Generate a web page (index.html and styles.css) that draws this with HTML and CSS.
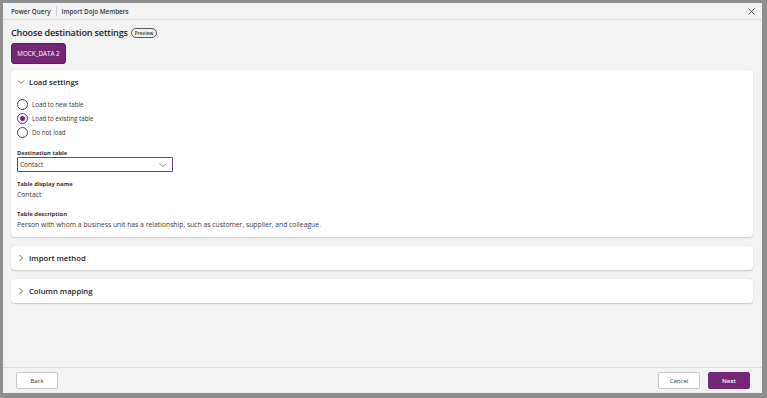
FILE: index.html
```html
<!DOCTYPE html>
<html>
<head>
<meta charset="utf-8">
<link rel="stylesheet" href="styles.css">
</head>
<body>
<div class="dialog">
  <div class="topbar">
    <span class="crumb">Power Query</span>
    <span class="sep"></span>
    <span class="crumb">Import Dojo Members</span>
    <span class="close"><svg width="7" height="7" viewBox="0 0 7 7"><path d="M0.5 0.5L6.5 6.5M6.5 0.5L0.5 6.5" stroke="#444" stroke-width="0.9"/></svg></span>
  </div>
  <div class="content">
    <div class="titlerow">
      <h1 class="title">Choose destination settings</h1>
      <span class="badge">Preview</span>
    </div>
    <div class="tabs"><button class="tab">MOCK_DATA 2</button></div>
    <div class="card card-open">
      <div class="card-head">
        <svg class="chev" width="8" height="8" viewBox="0 0 8 8"><path d="M1 2.5L4 5.5L7 2.5" fill="none" stroke="#555" stroke-width="0.9"/></svg>
        <span class="card-title">Load settings</span>
      </div>
      <div class="radios">
        <div class="radio"><span class="circle"></span><span class="rlabel">Load to new table</span></div>
        <div class="radio"><span class="circle checked"></span><span class="rlabel">Load to existing table</span></div>
        <div class="radio"><span class="circle"></span><span class="rlabel">Do not load</span></div>
      </div>
      <div class="field field-first">
        <div class="flabel">Destination table</div>
        <div class="select"><span>Contact</span><svg width="8" height="6" viewBox="0 0 8 6"><path d="M0.5 1.5L4 4.5L7.5 1.5" fill="none" stroke="#666" stroke-width="0.8"/></svg></div>
      </div>
      <div class="field">
        <div class="flabel">Table display name</div>
        <div class="fvalue">Contact</div>
      </div>
      <div class="field field-last">
        <div class="flabel">Table description</div>
        <div class="fvalue">Person with whom a business unit has a relationship, such as customer, supplier, and colleague.</div>
      </div>
    </div>
    <div class="card card-closed">
      <div class="card-head">
        <svg class="chev" width="8" height="8" viewBox="0 0 8 8"><path d="M2.5 1L5.5 4L2.5 7" fill="none" stroke="#555" stroke-width="0.9"/></svg>
        <span class="card-title">Import method</span>
      </div>
    </div>
    <div class="card card-closed">
      <div class="card-head">
        <svg class="chev" width="8" height="8" viewBox="0 0 8 8"><path d="M2.5 1L5.5 4L2.5 7" fill="none" stroke="#555" stroke-width="0.9"/></svg>
        <span class="card-title">Column mapping</span>
      </div>
    </div>
  </div>
  <div class="footer">
    <button class="btn">Back</button>
    <div class="spacer"></div>
    <button class="btn">Cancel</button>
    <button class="btn btn-primary">Next</button>
  </div>
</div>
</body>
</html>
```
FILE: styles.css
```css
html, body {
  margin: 0;
  padding: 0;
  height: 100%;
}
body {
  background: #8e8e8e;
  font-family: "Open Sans", "Noto Sans", sans-serif;
  color: #242424;
  padding: 3px 5px 5px 3px;
  box-sizing: border-box;
  height: 398px;
}
.dialog {
  background: #f3f3f3;
  height: 390px;
  display: flex;
  flex-direction: column;
}
.topbar {
  height: 16px;
  border-bottom: 1px solid #dcdcdc;
  display: flex;
  align-items: center;
  padding: 0 8px;
  flex-shrink: 0;
}
.crumb {
  font-size: 6.3px;
  font-weight: 600;
  color: #333;
}
.sep {
  width: 1px;
  height: 10px;
  background: #d0d0d0;
  margin: 0 5px;
}
.close {
  margin-left: auto;
  display: flex;
  margin-right: -1px;
}
.content {
  flex: 1;
  padding: 0 9px 0 8px;
}
.titlerow {
  display: flex;
  align-items: center;
  margin-top: 6px;
  height: 13px;
}
.title {
  font-size: 9.1px;
  font-weight: 600;
  margin: 0;
  color: #242424;
  letter-spacing: -0.18px;
}
.badge {
  margin-left: 3px;
  border: 1px solid #555;
  border-radius: 6px;
  font-size: 4.8px;
  font-weight: 600;
  padding: 1px 3px;
  line-height: 6px;
  color: #333;
}
.tabs {
  margin-top: 4px;
  display: flex;
}
.tab {
  background: #742774;
  color: #fff;
  border: 1px solid #5b1e5b;
  border-radius: 3px;
  font-family: inherit;
  font-size: 6.3px;
  height: 21px;
  width: 55px;
  padding: 0;
}
.card {
  background: #fff;
  border-radius: 4px;
  box-shadow: 0 0.5px 1.5px rgba(0,0,0,0.18);
  margin-top: 6px;
}
.card-open {
  height: 167px;
  padding: 0 7px 0 6px;
  box-sizing: border-box;
}
.card-closed {
  height: 24px;
  margin-top: 9px;
  padding: 0 7px 0 6px;
  display: flex;
  align-items: center;
}
.card-open .card-head {
  height: 24px;
  margin-bottom: 5px;
}
.card-head {
  display: flex;
  align-items: center;
}
.chev {
  margin-right: 4px;
}
.card-title {
  font-size: 7.7px;
  font-weight: 600;
  color: #242424;
}
.radios {
  display: flex;
  flex-direction: column;
  gap: 4px;
}
.radio {
  display: flex;
  align-items: center;
  height: 10px;
}
.circle {
  width: 9px;
  height: 9px;
  border: 1px solid #444;
  border-radius: 50%;
  box-sizing: content-box;
  margin-right: 4px;
  display: flex;
  align-items: center;
  justify-content: center;
}
.circle.checked {
  border-color: #742774;
}
.circle.checked::after {
  content: "";
  width: 5px;
  height: 5px;
  border-radius: 50%;
  background: #742774;
}
.rlabel {
  font-size: 6.2px;
  color: #333;
}
.field {
  margin-top: 8px;
}
.field-first {
  margin-top: 12px;
}
.field-last {
  margin-top: 10px;
}
.flabel {
  font-size: 5.8px;
  font-weight: 700;
  color: #333;
  line-height: 8px;
}
.select {
  height: 13px;
  border: 1px solid #7a3d7a;
  border-radius: 1px;
  display: flex;
  align-items: center;
  justify-content: space-between;
  padding: 0 5px 0 2px;
  box-sizing: content-box;
  font-size: 6.5px;
  color: #333;
  width: 147px;
}
.fvalue {
  font-size: 6.8px;
  color: #3a3a3a;
  line-height: 10px;
  margin-top: 2px;
}
.footer {
  height: 25px;
  border-top: 1px solid #dcdcdc;
  display: flex;
  align-items: center;
  padding: 0 12px 0 13px;
  flex-shrink: 0;
}
.spacer {
  flex: 1;
}
.btn {
  width: 42px;
  height: 17px;
  border: 1px solid #c8c8c8;
  background: #fff;
  border-radius: 2px;
  font-family: inherit;
  font-size: 6px;
  color: #333;
  padding: 0;
  margin-left: 8px;
}
.btn:first-child {
  margin-left: 0;
}
.btn-primary {
  background: #742774;
  border-color: #742774;
  color: #fff;
  font-weight: 600;
}
```
